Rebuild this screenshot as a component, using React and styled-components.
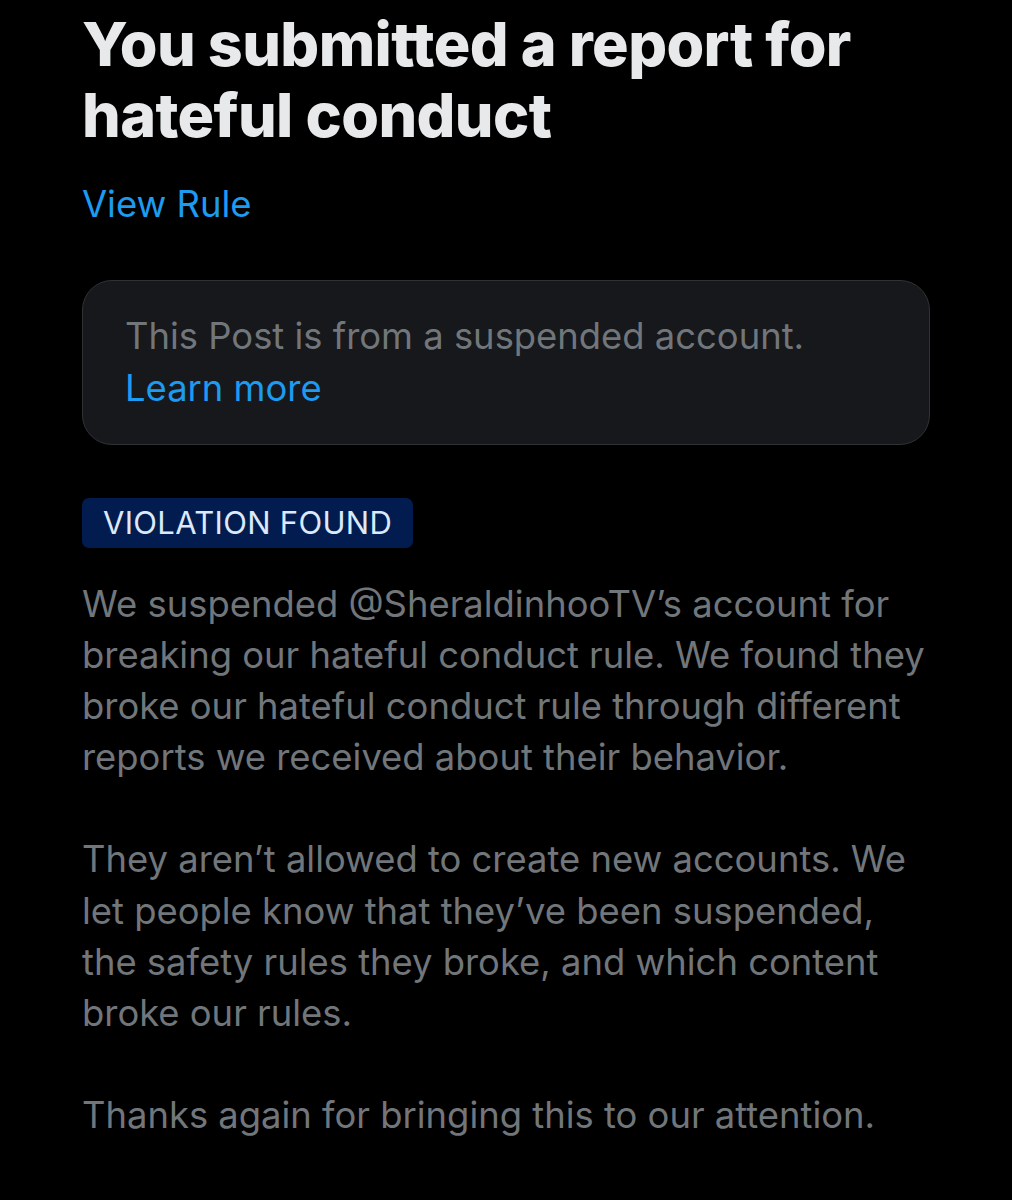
import styled, { createGlobalStyle } from "styled-components";

const GlobalStyle = createGlobalStyle`
  html, body {
    margin: 0;
    padding: 0;
    background: #000;
  }
  body {
    font-family: Inter, "Noto Sans", sans-serif;
    -webkit-font-smoothing: antialiased;
  }
`;

const Page = styled.main`
  width: 1012px;
  height: 1200px;
  box-sizing: border-box;
  padding: 0 82px;
  background: #000;
  overflow: hidden;
`;

const Title = styled.h1`
  margin: 0;
  padding-top: 9px;
  font-size: 61px;
  line-height: 71px;
  font-weight: 800;
  letter-spacing: -0.6px;
  color: #e7e9ea;
`;

const TextLink = styled.a`
  display: block;
  color: #1d9bf0;
  text-decoration: none;
  font-size: 36.4px;
  line-height: 52px;
`;

const RuleLink = styled(TextLink)`
  margin-top: 27px;
`;

const Notice = styled.div`
  margin-top: 50px;
  height: 165px;
  box-sizing: border-box;
  padding: 29px 42px 27px;
  background: #16181c;
  border: 1.5px solid #2f3336;
  border-radius: 30px;
`;

const NoticeText = styled.p`
  margin: 0;
  color: #71767b;
  font-size: 36.4px;
  line-height: 52px;
`;

const Badge = styled.div`
  display: inline-block;
  margin-top: 53px;
  padding: 0 21px;
  height: 50px;
  line-height: 50px;
  border-radius: 7px;
  background: #031c4f;
  color: #dce9fb;
  font-size: 31px;
  letter-spacing: 0.3px;
`;

const Body = styled.div`
  margin-top: 31px;
  color: #71767b;
  font-size: 36.4px;
  line-height: 51.1px;
`;

const Paragraph = styled.p`
  margin: 0 0 51.1px;
  white-space: nowrap;
`;

export default function App() {
  return (
    <>
      <GlobalStyle />
      <Page>
        <Title>
          You submitted a report for
          <br />
          hateful conduct
        </Title>
        <RuleLink href="#">View Rule</RuleLink>
        <Notice>
          <NoticeText>This Post is from a suspended account.</NoticeText>
          <TextLink href="#">Learn more</TextLink>
        </Notice>
        <Badge>VIOLATION FOUND</Badge>
        <Body>
          <Paragraph>
            We suspended @SheraldinhooTV’s account for
            <br />
            breaking our hateful conduct rule. We found they
            <br />
            broke our hateful conduct rule through different
            <br />
            reports we received about their behavior.
          </Paragraph>
          <Paragraph>
            They aren’t allowed to create new accounts. We
            <br />
            let people know that they’ve been suspended,
            <br />
            the safety rules they broke, and which content
            <br />
            broke our rules.
          </Paragraph>
          <Paragraph>Thanks again for bringing this to our attention.</Paragraph>
        </Body>
      </Page>
    </>
  );
}
